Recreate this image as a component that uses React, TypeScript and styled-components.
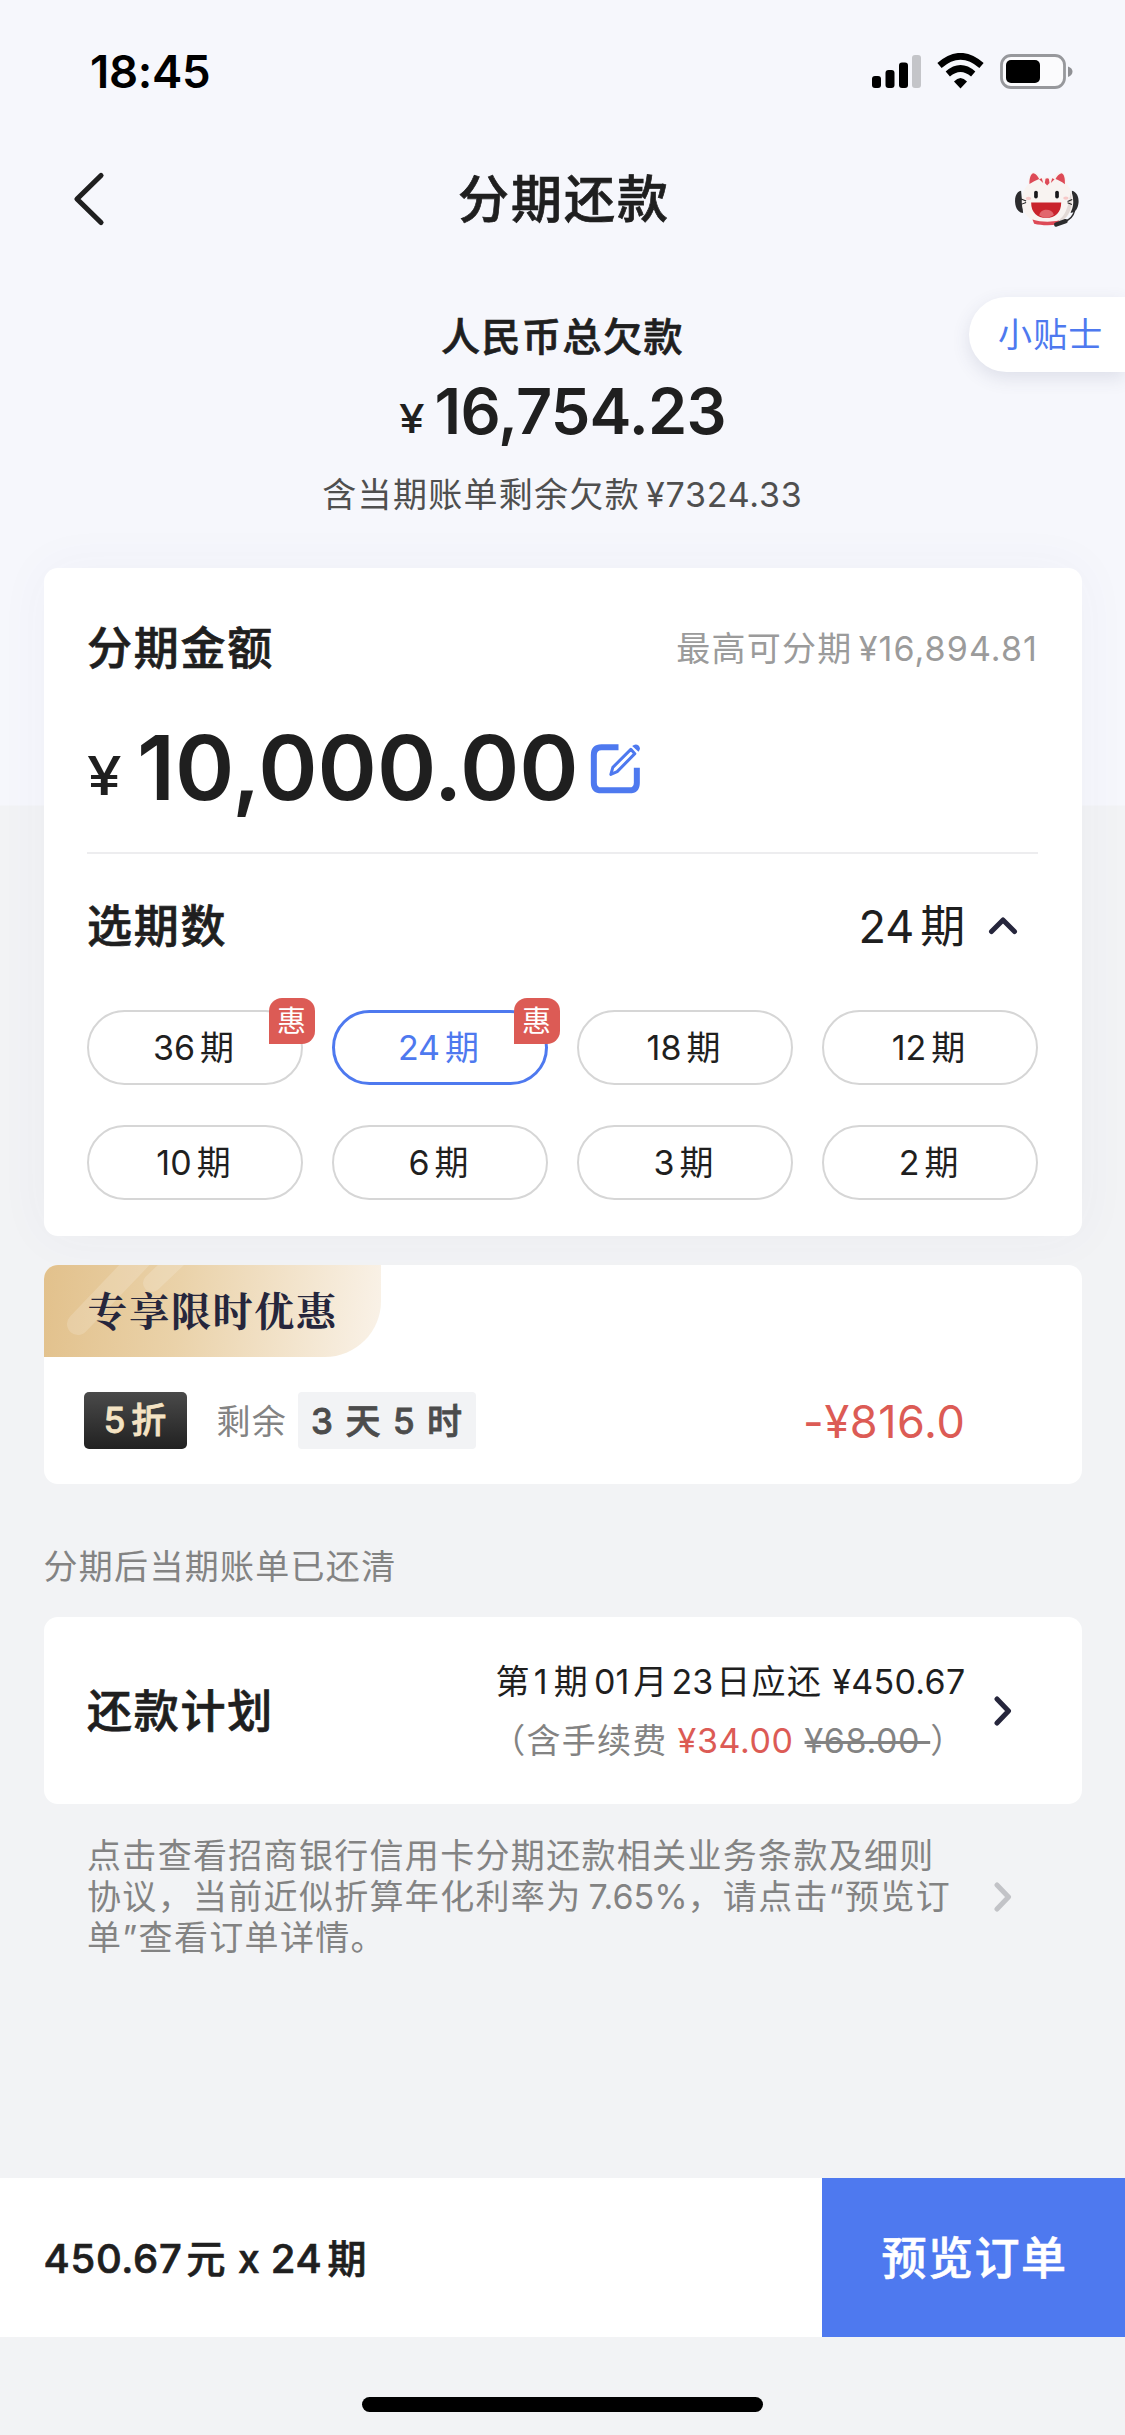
import React from "react";
import styled, { createGlobalStyle, css } from "styled-components";

const color = {
  ink: "#1f1f1f",
  sub: "#4f4f4f",
  gray: "#838383",
  light: "#9b9b9b",
  blue: "#4e79ef",
  red: "#dc5b55",
  navy: "#26263c",
  page: "#f2f3f5",
};

const GlobalStyle = createGlobalStyle`
  * { box-sizing: border-box; }
  body {
    margin: 0;
    font-family: Inter, "Noto Sans CJK SC", sans-serif;
    color: ${color.ink};
  }
`;

const Page = styled.div`
  display: flex;
  flex-direction: column;
  width: 1125px;
  height: 2435px;
  overflow: hidden;
  background: linear-gradient(#f6f7fc 0, #f6f7fc 805px, ${color.page} 806px);
`;

interface TextProps {
  $size: number;
  $weight?: number;
  $color?: string;
  $line?: number;
}

const Text = styled.div<TextProps>`
  padding-top: 2px;
  font-size: ${(p) => p.$size}px;
  font-weight: ${(p) => p.$weight ?? 400};
  color: ${(p) => p.$color ?? color.ink};
  line-height: ${(p) => (p.$line ?? 60) - 2}px;
  letter-spacing: 0.038em;
  white-space: nowrap;
  ${(p) => (p.$weight ?? 400) > 400 && css`-webkit-text-stroke: 0.7px currentColor;`}
`;

interface NumProps {
  $ls?: number;
  $l?: number;
  $r?: number;
  $size?: number;
}

const Num = styled.span<NumProps>`
  ${(p) => p.$size && css`font-size: ${p.$size}px;`}
  letter-spacing: ${(p) => p.$ls ?? 0}px;
  margin-left: ${(p) => p.$l ?? 0}px;
  margin-right: ${(p) => p.$r ?? 0}px;
`;

/* ---------- status bar and navigation ---------- */

const StatusBar = styled.header`
  display: flex;
  align-items: center;
  justify-content: space-between;
  height: 143px;
  padding: 0 50px 0 90px;
`;

const Clock = styled.time`
  font-size: 45.5px;
  font-weight: 600;
  line-height: 60px;
  letter-spacing: -0.3px;
  color: #000;
`;

const StatusIcons = styled.svg`
  width: 204px;
  height: 38px;
`;

const NavBar = styled.nav`
  display: grid;
  grid-template-columns: 75px 1fr 75px;
  align-items: center;
  height: 112px;
  padding: 0 37px 0 71px;
`;

const NavTitle = styled.h1`
  margin: 2px 31px 0 0;
  font-size: 51px;
  font-weight: 500;
  line-height: 70px;
  letter-spacing: 0.038em;
  text-align: center;
  -webkit-text-stroke: 0.7px currentColor;
`;

/* ---------- summary ---------- */

const Summary = styled.section`
  position: relative;
  display: flex;
  flex-direction: column;
  align-items: center;
  height: 313px;
  padding-top: 51px;
`;

const TipTab = styled.button`
  position: absolute;
  top: 42px;
  right: 0;
  width: 156px;
  height: 75px;
  padding: 1px 0 0 29px;
  border: 0;
  border-radius: 38px 0 0 38px;
  background: #fff;
  box-shadow: 0 6px 18px rgba(60, 70, 110, 0.13);
  color: ${color.blue};
  font: 400 34px/74px Inter, "Noto Sans CJK SC", sans-serif;
  letter-spacing: 0.034em;
  text-align: left;
`;

const TotalRow = styled.div`
  display: flex;
  align-items: baseline;
  gap: 13px;
  margin-top: 5px;
  line-height: 80px;
  font-size: 63px;
  font-weight: 600;
`;

const Yen = styled.span<{ $size: number; $up?: number }>`
  font-size: ${(p) => p.$size}px;
  font-weight: 500;
  line-height: 1;
  transform: translateY(${(p) => -(p.$up ?? 0)}px) scaleX(1.15);
  transform-origin: left;
`;

const Detail = styled(Text)`
  margin-top: 18px;
`;

/* ---------- cards ---------- */

const Card = styled.section`
  margin: 0 43.5px;
  border-radius: 14px;
  background: #fff;
`;

const AmountCard = styled(Card)`
  height: 668px;
  padding: 50px 43.5px 0;
  box-shadow: 0 0 54px rgba(70, 80, 130, 0.045);
`;

const Row = styled.div<{ $mt?: number }>`
  display: flex;
  align-items: center;
  justify-content: space-between;
  margin-top: ${(p) => p.$mt ?? 0}px;
`;

const AmountRow = styled.div`
  display: flex;
  align-items: center;
  height: 110px;
  margin-top: 34.5px;
`;

const Figures = styled.div`
  display: flex;
  align-items: baseline;
  line-height: 110px;
  font-size: 90px;
  font-weight: 600;
`;

const EditIcon = styled.svg`
  width: 51px;
  height: 50px;
  margin: 2px 0 0 11px;
`;

const Divider = styled.hr`
  height: 2px;
  margin: 29.5px 0 0;
  border: 0;
  background: #ededef;
`;

const TermPicked = styled.div`
  display: flex;
  align-items: center;
  gap: 21px;
  padding-right: 20px;
`;

const TermGrid = styled.div`
  display: grid;
  grid-template-columns: repeat(4, 216px);
  gap: 40.3px 29px;
  margin-top: 53.5px;
`;

const TermPill = styled.button<{ $on?: boolean }>`
  position: relative;
  height: 75px;
  padding: 0 3px 0 0;
  border: ${(p) => (p.$on ? `3px solid ${color.blue}` : "2px solid #d6d6d6")};
  border-radius: 38px;
  background: #fff;
  color: ${(p) => (p.$on ? color.blue : color.ink)};
  font: 400 34px/69px Inter, "Noto Sans CJK SC", sans-serif;
`;

const Badge = styled.span<{ $inset: number }>`
  position: absolute;
  top: ${(p) => -12 - p.$inset}px;
  right: ${(p) => -11.5 - p.$inset}px;
  width: 46px;
  height: 46px;
  border-radius: 13px 13px 13px 0;
  background: ${color.red};
  color: #fff;
  font-size: 29px;
  line-height: 47px;
  text-align: center;
`;

/* ---------- promotion ---------- */

const PromoCard = styled(Card)`
  height: 219px;
  margin-top: 29px;
`;

const PromoTag = styled.div`
  position: relative;
  width: 337px;
  height: 92px;
  padding-left: 44px;
  overflow: hidden;
  border-radius: 14px 0 56px 0;
  background: linear-gradient(96deg, #e2c18c 0%, #ead2a9 40%, #f9f1e6 98%);
  color: ${color.navy};
  font-family: "Noto Serif CJK SC", serif;
  font-size: 40px;
  font-weight: 700;
  line-height: 88px;
  letter-spacing: 1.7px;
  white-space: nowrap;
`;

const TagShine = styled.svg`
  position: absolute;
  inset: 0;
  width: 337px;
  height: 92px;
`;

const TagLabel = styled.span`
  position: relative;
`;

const PromoRow = styled.div`
  display: flex;
  align-items: center;
  height: 57px;
  margin-top: 35px;
  padding: 0 116px 0 40px;
`;

const Discount = styled.span`
  width: 103px;
  margin-right: 30px;
  border-radius: 5px;
  background: linear-gradient(#4a4a4a, #212121);
  color: #f4e3c3;
  font-size: 35px;
  font-weight: 500;
  line-height: 57px;
  text-align: center;
  -webkit-text-stroke: 0.8px currentColor;
`;

const Countdown = styled.span`
  display: flex;
  justify-content: space-between;
  width: 178px;
  margin: 0 auto 0 11px;
  padding: 0 14px 0 13px;
  border-radius: 4px;
  background: ${color.page};
  color: #4c4c4c;
  font-size: 35px;
  font-weight: 500;
  line-height: 58px;
  height: 57px;
  -webkit-text-stroke: 0.8px currentColor;
`;

/* ---------- repayment plan ---------- */

const Hint = styled(Text)`
  margin: 57px 0 0 43.5px;
`;

const PlanCard = styled(Card)`
  display: flex;
  align-items: center;
  height: 187px;
  margin-top: 26px;
  padding: 0 70px 0 43.5px;
`;

const PlanDetail = styled.div`
  display: flex;
  flex-direction: column;
  align-items: flex-end;
  margin: 0 28px 0 auto;
`;

const Fee = styled.span`
  margin-left: 10px;
  color: ${color.red};
  letter-spacing: 0.6px;
`;

const Struck = styled.s`
  margin-left: 11px;
  letter-spacing: 0.6px;
  text-decoration-thickness: 3px;
`;

const Terms = styled.section`
  display: flex;
  align-items: center;
  justify-content: space-between;
  margin-top: 31px;
  padding: 0 113.5px 0 87px;
`;

const TermsText = styled.p`
  margin: 0;
  color: ${color.gray};
  font-size: 34px;
  line-height: 41px;
  letter-spacing: 0.0388em;
  white-space: nowrap;
`;

const Arrow = styled.svg`
  display: block;
  flex: none;
`;

/* ---------- footer ---------- */

const BottomBar = styled.footer`
  display: flex;
  justify-content: space-between;
  height: 159px;
  margin-top: auto;
  padding-left: 43.5px;
  background: #fff;
`;

const PreviewButton = styled.button`
  width: 303px;
  padding: 2px 0 0 2px;
  border: 0;
  background: ${color.blue};
  color: #fff;
  font: 500 45px/60px Inter, "Noto Sans CJK SC", sans-serif;
  letter-spacing: 0.034em;
  -webkit-text-stroke: 0.6px currentColor;
`;

const HomeArea = styled.div`
  display: flex;
  justify-content: center;
  height: 98px;
  padding-top: 60px;
`;

const HomeIndicator = styled.div`
  width: 401px;
  height: 15px;
  border-radius: 8px;
  background: #000;
`;

const Chevron = ({ stroke }: { stroke: string }) => (
  <Arrow width="18" height="30" viewBox="0 0 18 30">
    <path d="M3 3 L14.5 15 L3 27" fill="none" stroke={stroke} strokeWidth="5" strokeLinecap="round" strokeLinejoin="round" />
  </Arrow>
);

const Mascot = () => (
  <svg width="67" height="58.5" viewBox="100 60 200 175">
    <path d="M124 122c-14 3-19 18-18 34 1 17 8 31 24 33z" fill="#2c2c2e" />
    <path d="M276 122c14 3 21 18 20 34-1 17-8 31-24 33z" fill="#2c2c2e" />
    <path d="M146 102C146 80 150 68 160 66c10 0 20 10 24 18 11-3 25-3 36 0 5-9 14-18 24-18 11 2 15 16 16 36 14 15 20 32 20 54 0 38-30 63-78 65-46-2-74-26-76-64 0-22 6-40 20-55z" fill="#f8f3f1" />
    <path d="M272 128c8 30 2 60-18 78-14 11-34 15-52 15 52-3 62-45 70-93z" fill="#e2d9d6" />
    <path d="M149 102c0-18 4-31 12-32 8 2 14 10 17 17-10 4-20 9-29 15zM227 87c4-8 11-16 18-17 8 2 11 16 10 33-9-8-18-12-28-16z" fill="#dd4a57" />
    <path d="M178 88l12 11-4-14zM224 88l-11 11 4-14zM197 86q5-2 10 0l2 13-7 7-7-7z" fill="#dd4a57" />
    <rect x="163" y="122" width="11" height="23" rx="5.5" fill="#17171a" />
    <rect x="226" y="122" width="11" height="23" rx="5.5" fill="#17171a" />
    <ellipse cx="146" cy="145" rx="8" ry="5" fill="#f7c9c8" />
    <ellipse cx="258" cy="144" rx="8" ry="5" fill="#f7c9c8" />
    <path d="M154 157h90c0 30-18 46-45 46s-45-16-45-46z" fill="#c9232c" />
    <path d="M178 195c3-11 12-16 22-16s19 5 22 15c-13 11-32 11-44 1z" fill="#e2676d" />
    <path d="M158 208c25 8 55 8 80 3l-4 12c-25 4-50 3-71-2z" fill="#dd4a57" />
    <path d="M124 147l15 6M126 162l13-5M277 148l-14 6M276 163l-13-5" stroke="#222" strokeWidth="3" fill="none" />
    <path d="M284 182c-4 16-14 27-30 32" stroke="#2c2c2e" strokeWidth="4" fill="none" />
    <path d="M229 223l28-10" stroke="#2c2c2e" strokeWidth="13" strokeLinecap="round" />
  </svg>
);

const terms = [
  { count: 36, promo: true },
  { count: 24, promo: true, on: true },
  { count: 18 },
  { count: 12 },
  { count: 10 },
  { count: 6 },
  { count: 3 },
  { count: 2 },
];

export default function App() {
  return (
    <>
      <GlobalStyle />
      <Page>
        <StatusBar>
          <Clock>18:45</Clock>
          <StatusIcons viewBox="0 0 204 38">
            <rect x="1" y="23" width="9" height="12" rx="3" />
            <rect x="14.5" y="17" width="9" height="18" rx="3" />
            <rect x="28" y="9.5" width="9" height="25.5" rx="3" />
            <rect x="41" y="2" width="9" height="33" rx="3" fill="#c4c5c9" />
            <path d="M68.5 12.5Q89.5 -6 110.5 12.5" fill="none" stroke="#000" strokeWidth="6.5" />
            <path d="M76.8 21Q89.5 10 102.2 21" fill="none" stroke="#000" strokeWidth="6.5" />
            <path d="M83 28.5Q89.5 21.5 96 28.5L89.5 35.5Z" />
            <rect x="130.5" y="2.5" width="63" height="32" rx="9.5" fill="#fbfbfd" stroke="#97989c" strokeWidth="2.8" />
            <rect x="135" y="7" width="34" height="23" rx="5" />
            <path d="M197 13.5Q201.5 15 201.5 18.5T197 24Z" fill="#8f9094" />
          </StatusIcons>
        </StatusBar>

        <NavBar>
          <Arrow width="34" height="56" viewBox="0 0 34 56">
            <path d="M30 4.5L6 28L30 51.5" fill="none" stroke={color.ink} strokeWidth="5.2" strokeLinecap="round" strokeLinejoin="round" />
          </Arrow>
          <NavTitle>分期还款</NavTitle>
          <Mascot />
        </NavBar>

        <Summary>
          <Text $size={39} $weight={500}>人民币总欠款</Text>
          <TotalRow>
            <Yen $size={40} $up={1}>¥</Yen>
            <Num $ls={-0.8}>16,754.23</Num>
          </TotalRow>
          <Detail $size={34} $color={color.sub} $line={50}>
            含当期账单剩余欠款<Num $l={6} $ls={0.8}>¥7324.33</Num>
          </Detail>
          <TipTab>小贴士</TipTab>
        </Summary>

        <AmountCard>
          <Row>
            <Text $size={45} $weight={500}>分期金额</Text>
            <Text $size={34} $color={color.light}>
              最高可分期<Num $l={6} $ls={1.1}>¥16,894.81</Num>
            </Text>
          </Row>
          <AmountRow>
            <Figures>
              <Yen $size={54} $up={5}>¥</Yen>
              <Num $l={20}>10,000.00</Num>
            </Figures>
            <EditIcon viewBox="62 56 152 150">
              <path d="M147 66H96Q73 66 73 89V172Q73 195 96 195H180Q202 195 202 172V127" fill="none" stroke={color.blue} strokeWidth="18" />
              <path d="M124 147L130 126L184 72L196 85L143 139Z" fill="none" stroke={color.blue} strokeWidth="9" strokeLinejoin="round" />
              <path d="M188 62Q198 53 208 61Q215 70 207 79Z" fill={color.blue} />
            </EditIcon>
          </AmountRow>
          <Divider />
          <Row $mt={42}>
            <Text $size={45} $weight={500}>选期数</Text>
            <TermPicked>
              <Text $size={45}><Num $r={6}>24</Num>期</Text>
              <Arrow width="30" height="18" viewBox="0 0 30 18">
                <path d="M3.5 14.5L15 3L26.5 14.5" fill="none" stroke={color.navy} strokeWidth="5" strokeLinecap="round" strokeLinejoin="round" />
              </Arrow>
            </TermPicked>
          </Row>
          <TermGrid>
            {terms.map((t) => (
              <TermPill key={t.count} $on={t.on}>
                <Num $r={5}>{t.count}</Num>期
                {t.promo && <Badge $inset={t.on ? 3 : 2}>惠</Badge>}
              </TermPill>
            ))}
          </TermGrid>
        </AmountCard>

        <PromoCard>
          <PromoTag>
            <TagShine viewBox="0 0 337 92">
              <path d="M34 59L98 -8" stroke="#fff" strokeOpacity="0.17" strokeWidth="22" strokeLinecap="round" />
              <path d="M108 18L150 -22" stroke="#fff" strokeOpacity="0.17" strokeWidth="18" strokeLinecap="round" />
            </TagShine>
            <TagLabel>专享限时优惠</TagLabel>
          </PromoTag>
          <PromoRow>
            <Discount><Num $r={6}>5</Num>折</Discount>
            <Text $size={34} $color={color.gray} $line={57}>剩余</Text>
            <Countdown><span>3</span><span>天</span><span>5</span><span>时</span></Countdown>
            <Text $size={45} $color={color.red} $line={57}><Num $ls={0.6}>-¥816.0</Num></Text>
          </PromoRow>
        </PromoCard>

        <Hint $size={34} $color={color.gray} $line={50}>分期后当期账单已还清</Hint>

        <PlanCard>
          <Text $size={45} $weight={500}>还款计划</Text>
          <PlanDetail>
            <Text $size={34} $line={58.5}>
              第<Num $l={3} $r={6}>1</Num>期<Num $l={5} $r={4}>01</Num>月<Num $l={3} $r={3}>23</Num>日应还<Num $l={10} $ls={0.3}>¥450.67</Num>
            </Text>
            <Text $size={34} $line={58.5} $color={color.gray}>
              （含手续费<Fee>¥34.00</Fee><Struck>¥68.00&nbsp;</Struck>）
            </Text>
          </PlanDetail>
          <Chevron stroke={color.navy} />
        </PlanCard>

        <Terms>
          <TermsText>
            点击查看招商银行信用卡分期还款相关业务条款及细则<br />
            协议，当前近似折算年化利率为<Num $l={7}>7.65%</Num>，请点击“预览订<br />
            单”查看订单详情。
          </TermsText>
          <Chevron stroke="#c2c3c7" />
        </Terms>

        <BottomBar>
          <Text $size={39} $weight={500} $line={159}>
            <Num $size={40} $ls={0.7} $r={4}>450.67</Num>元<Num $l={11} $r={11}>x</Num><Num $size={40} $ls={0.7} $r={5}>24</Num>期
          </Text>
          <PreviewButton>预览订单</PreviewButton>
        </BottomBar>
        <HomeArea><HomeIndicator /></HomeArea>
      </Page>
    </>
  );
}
